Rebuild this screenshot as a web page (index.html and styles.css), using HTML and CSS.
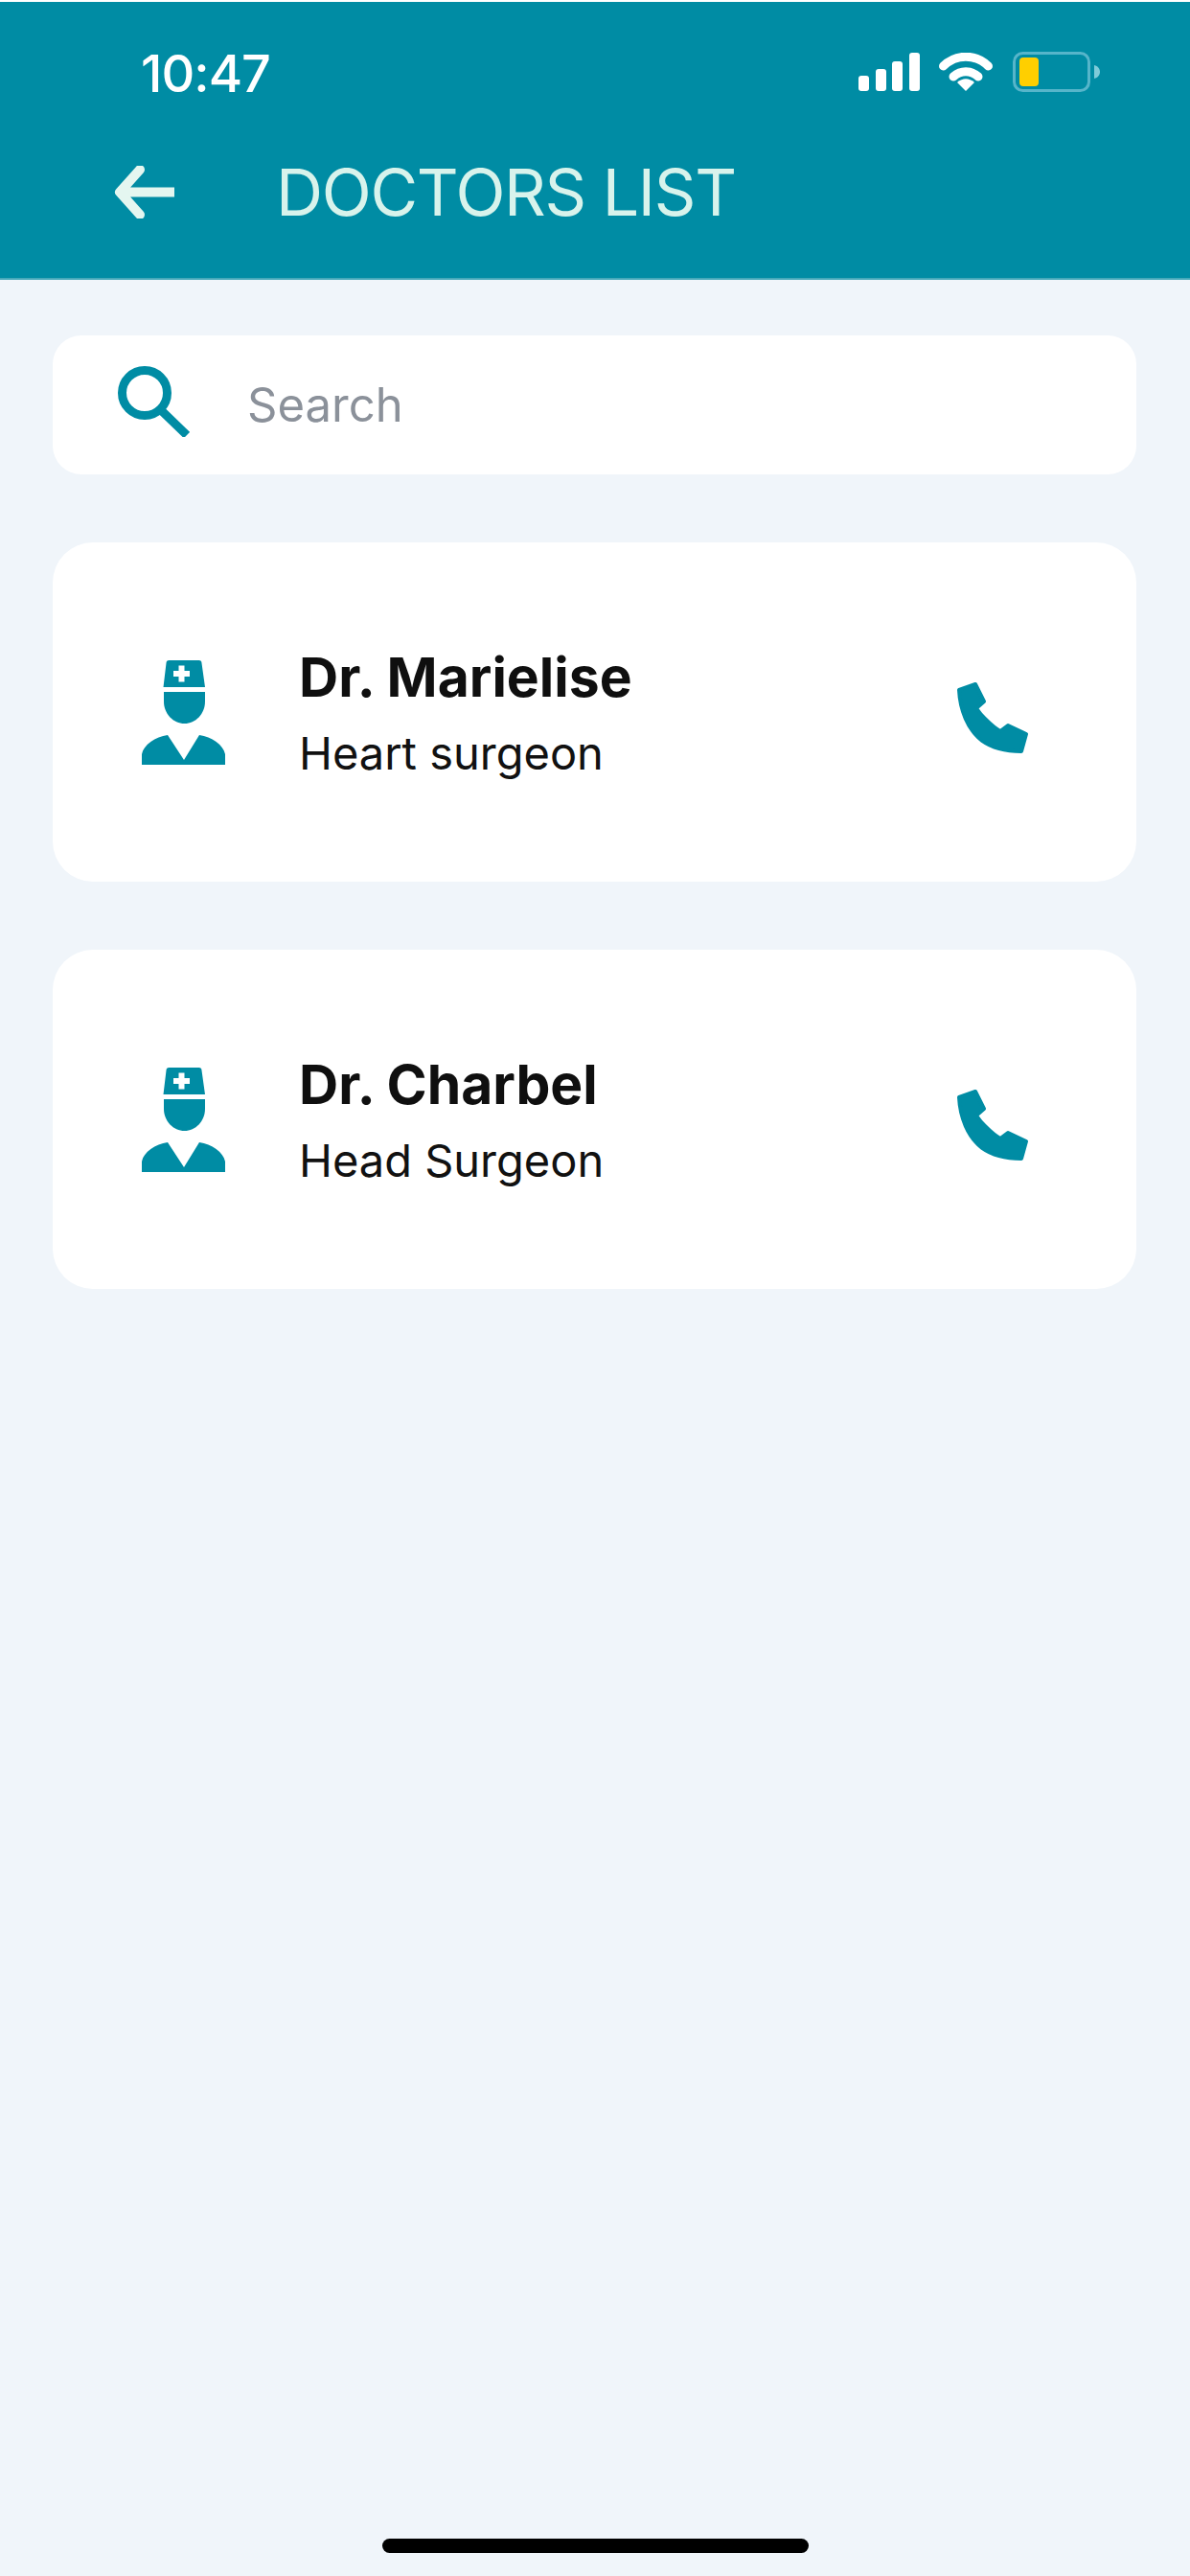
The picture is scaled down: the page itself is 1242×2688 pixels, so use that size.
FILE: index.html
```html
<!DOCTYPE html>
<html lang="en">
<head>
<meta charset="utf-8">
<title>Doctors List</title>
<link rel="stylesheet" href="styles.css">
</head>
<body>
<div class="screen">
  <header class="header">
    <div class="status">
      <span class="time">10:47</span>
      <div class="status-icons">
        <svg class="signal" viewBox="0 0 65 40" width="65" height="40"><rect x="0" y="24" width="11" height="16" rx="3"/><rect x="18" y="17" width="11" height="23" rx="3"/><rect x="35" y="9" width="11" height="31" rx="3"/><rect x="53" y="0" width="11" height="40" rx="3"/></svg>
        <svg class="wifi" viewBox="0 0 56 40" width="56" height="40"><path d="M4.500 14C18 1 38 1 51.500 14" /><path d="M15 25C23 18 33 18 41 25"/><path class="wifi-dot" d="M28 40L19 31C25 26 31 26 37 31Z"/></svg>
        <svg class="battery" viewBox="0 0 91 42" width="91" height="42"><rect class="battery-shell" x="1.500" y="1.500" width="78" height="39" rx="9"/><rect class="battery-level" x="7" y="6" width="20" height="30" rx="4"/><path class="battery-nub" d="M85 14C89 15 91 18 91 21C91 24 89 27 85 28Z"/></svg>
      </div>
    </div>
    <div class="title-bar">
      <svg class="back" viewBox="0 0 63 55" width="63" height="55"><path d="M27 4L6 27.500L27 51M6 27.500H63"/></svg>
      <h1 class="title">DOCTORS LIST</h1>
    </div>
  </header>
  <main class="content">
    <div class="search">
      <svg class="search-icon" viewBox="0 0 75 74" width="75" height="74"><circle cx="28" cy="28" r="23.500"/><path d="M44 45L72 72"/></svg>
      <span class="search-text">Search</span>
    </div>
    <article class="card">
      <svg class="doctor" viewBox="0 0 87 109" width="87" height="109"><use href="#doc"/></svg>
      <div class="info">
        <div class="name">Dr. Marielise</div>
        <div class="role">Heart surgeon</div>
      </div>
      <svg class="phone" viewBox="0 0 72 72" width="72" height="72"><use href="#tel"/></svg>
    </article>
    <article class="card">
      <svg class="doctor" viewBox="0 0 87 109" width="87" height="109"><use href="#doc"/></svg>
      <div class="info">
        <div class="name">Dr. Charbel</div>
        <div class="role">Head Surgeon</div>
      </div>
      <svg class="phone" viewBox="0 0 72 72" width="72" height="72"><use href="#tel"/></svg>
    </article>
  </main>
  <div class="home-bar"></div>
</div>
<svg class="defs" width="0" height="0">
  <defs>
    <g id="doc">
      <path d="M25.500 3Q25.500 0 28.500 0H59.500Q62.500 0 62.500 3L66 28H22.500Z"/>
      <path d="M38.500 5.500H44.500V11H50V17H44.500V22.500H38.500V17H33V11H38.500Z" fill="#fff"/>
      <path d="M23 33H66V43C66 56 56 66 44.500 66C33 66 23 56 23 43Z"/>
      <path d="M0 109V98C2 88 14 80 27 78L44 104L60 78C73 80 85 88 87 98V109Z"/>
    </g>
    <path id="tel" d="M1 7L18 1L27 19L19 26C21 29 24 33 28 37C33 42 38 47 44 50L52 44L71 53L66 71C50 71 36 68 25 60C10 48 2 28 1 7Z"/>
  </defs>
</svg>
</body>
</html>
```

FILE: styles.css
```css
* { box-sizing: border-box; }

html, body {
  margin: 0;
  padding: 0;
}

body {
  background: #f0f5fa;
  font-family: Inter, "Liberation Sans", sans-serif;
  color: #111;
}

.screen {
  width: 1242px;
  height: 2688px;
  display: flex;
  flex-direction: column;
  background: #f0f5fa;
  overflow: hidden;
}

.header {
  height: 292px;
  background: #008ca4;
  border-top: 2px solid #fff;
  border-bottom: 2px solid #45a9ba;
  flex: none;
}

.status {
  display: flex;
  align-items: flex-start;
  justify-content: space-between;
  padding: 53px 94px 0 147px;
}

.time {
  font-size: 54px;
  line-height: 44px;
  font-weight: 500;
  color: #fff;
  letter-spacing: -1px;
}

.status-icons {
  display: flex;
  align-items: flex-start;
  gap: 19px;
}

.signal { fill: #fff; }

.wifi {
  fill: none;
  stroke: #fff;
  stroke-width: 9;
  stroke-linecap: round;
}

.wifi-dot {
  fill: #fff;
  stroke: none;
}

.battery { margin-left: 2px; margin-top: -1px; }

.battery-shell {
  fill: none;
  stroke: #56b5ca;
  stroke-width: 3;
}

.battery-level { fill: #ffcf00; }
.battery-nub { fill: #7fcbd9; }

.title-bar {
  display: flex;
  align-items: center;
  padding: 62px 0 0 119px;
  gap: 106px;
}

.back {
  fill: none;
  stroke: #e4f6f0;
  stroke-width: 10;
  stroke-linejoin: round;
  stroke-linecap: round;
}

.title {
  margin: 0;
  font-size: 68px;
  line-height: 78px;
  font-weight: 400;
  color: #d8f3ec;
  letter-spacing: -1.300px;
  white-space: nowrap;
}

.content {
  flex: 1;
  display: flex;
  flex-direction: column;
  gap: 71px;
  padding: 58px 56px 0 55px;
}

.search {
  height: 145px;
  background: #fff;
  border-radius: 30px;
  display: flex;
  align-items: center;
  padding: 0 0 0 68px;
  gap: 60px;
}

.search-icon {
  fill: none;
  stroke: #008ca4;
  stroke-width: 9;
  margin-top: -7px;
}

.search-text {
  font-size: 49px;
  line-height: 60px;
  color: #8b919a;
}

.card {
  height: 354px;
  background: #fff;
  border-radius: 42px;
  display: flex;
  align-items: center;
  padding: 0 114px 0 93px;
  gap: 77px;
}

.doctor, .phone { fill: #008ca4; flex: none; }

.phone {
  margin-top: 12px;
  stroke: #008ca4;
  stroke-width: 4;
  stroke-linejoin: round;
  overflow: visible;
}

.info {
  flex: 1;
  display: flex;
  flex-direction: column;
  gap: 18px;
}

.name {
  font-size: 57px;
  line-height: 68px;
  font-weight: 700;
  color: #0f0f0f;
}

.role {
  font-size: 47px;
  line-height: 54px;
  color: #111;
}

.home-bar {
  flex: none;
  width: 445px;
  height: 15px;
  border-radius: 8px;
  background: #000;
  margin: 0 auto 24px 399px;
}

.defs { position: absolute; }
```
